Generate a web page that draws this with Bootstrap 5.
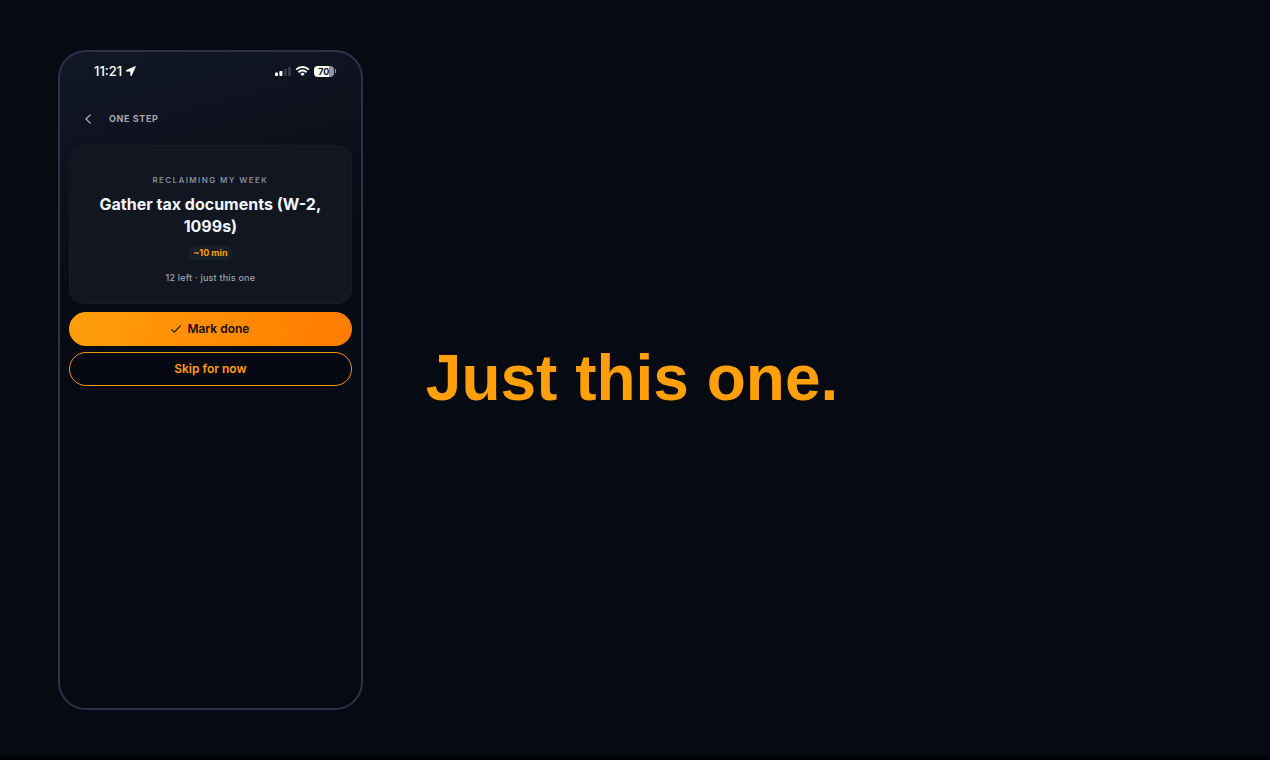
<!DOCTYPE html>
<html lang="en">
<head>
<meta charset="utf-8">
<meta name="viewport" content="width=device-width, initial-scale=1">
<title>Just this one.</title>
<link href="https://cdn.jsdelivr.net/npm/bootstrap@5.3.0/dist/css/bootstrap.min.css" rel="stylesheet">
<style>
  body { background: #060a12; color: #f4f6ff; font-family: Inter, sans-serif; }
  .stage { padding: 50px 58px 46px; gap: 63px; border-bottom: 4px solid #020207; }
  .phone { flex: 0 0 auto; width: 24vw; min-width: 304px; border: 2px solid #2e3148; border-radius: 28px;
    background: linear-gradient(165deg, #111725 0, #0e131f 90px, #080b14 240px, #060a12 320px); padding: 9px; }
  .status { padding: 0 16px 0 25px; height: 20px; font-size: 13px; line-height: 20px; font-weight: 500; color: #fff; }
  .battery { width: 20px; height: 11px; border-radius: 4px; font-size: 9px; line-height: 11px; font-weight: 700; color: #0b0f18;
    background: linear-gradient(90deg, #fff 75%, #92959c 75%); }
  .battery-tip { width: 1px; height: 4px; background: #92959c; margin-left: 1px; }
  .topbar { margin-top: 28px; height: 20px; padding-left: 12px; gap: 14px; font-size: 9px; line-height: 20px; font-weight: 700; letter-spacing: 0.6px; color: #a3a8b7; }
  .back { color: #b4b8c5; line-height: 0; width: 14px; }
  .task { margin-top: 16px; background: #111620; border: 1px solid #161b26; border-radius: 14px; padding: 27px 24px 18px; }
  .project { font-size: 8px; line-height: 14px; font-weight: 600; letter-spacing: 1.4px; color: #858a98; }
  .task-title { font-size: 16px; line-height: 22px; font-weight: 700; color: #f4f6ff; margin: 6px 0 9px; }
  .estimate { font-size: 9px; line-height: 14px; font-weight: 700; color: #ff9f0a; background: #18202c; padding: 0 5px; }
  .left-note { font-size: 9px; line-height: 14px; font-weight: 500; letter-spacing: 0.2px; color: #a0a4b0; margin-top: 11px; }
  .actions { gap: 6px; }
  .action { height: 34px; padding: 0; font-size: 12px; line-height: 18px; font-weight: 600; gap: 6px; }
  .action-done, .action-done:hover { border: 0; color: #160c08; background: linear-gradient(110deg, #ff9f0a, #ff7b00); }
  .action-skip { border: 1px solid #f5970b; color: #ff9f0a; background: #060912; }
  .tagline { font-family: "Liberation Sans", sans-serif; font-size: 64px; line-height: 74px; font-weight: 700; color: #ff9f0a; }
</style>
</head>
<body>
<main class="stage d-flex align-items-stretch min-vh-100">
  <section class="phone" aria-label="One step">
    <div class="status d-flex align-items-center justify-content-between">
      <div class="d-flex align-items-center gap-1">
        <span>11:21</span>
        <svg width="10" height="10" viewBox="0 0 10 10" aria-hidden="true"><path d="M9.6.3.5 4.3c-.5.3-.5 1 .1 1h4v4.1c0 .6.7.7 1 .1z" fill="#fff" stroke="#fff" stroke-width=".5" stroke-linejoin="round"/></svg>
      </div>
      <div class="d-flex align-items-center">
        <svg width="16" height="9" viewBox="0 0 16 9" aria-hidden="true"><rect y="5.5" width="3" height="3.5" rx=".8" fill="#fff"/><rect x="4.4" y="4" width="3" height="5" rx=".8" fill="#fff"/><rect x="8.8" y="2" width="3" height="7" rx=".8" fill="#363a45"/><rect x="13" width="3" height="9" rx=".8" fill="#363a45"/></svg>
        <svg class="ms-1 me-1" width="15" height="10" viewBox="0 0 15 10" fill="none" stroke="#fff" stroke-width="2" aria-hidden="true"><path d="M1.2 3.6a9 9 0 0 1 12.6 0M3.5 6.2a5.7 5.7 0 0 1 8 0"/><path d="M7.5 10 5.4 7.9a3 3 0 0 1 4.2 0z" fill="#fff" stroke="none"/></svg>
        <span class="battery text-center">70</span><span class="battery-tip"></span>
      </div>
    </div>
    <header class="topbar d-flex align-items-center">
      <button type="button" class="back btn border-0 p-0" aria-label="Back"><svg width="6" height="10" viewBox="0 0 6 10" fill="none" stroke="currentColor" stroke-width="1.2" stroke-linecap="round" stroke-linejoin="round"><path d="M5.2.8 1 5l4.2 4.2"/></svg></button>
      <span>ONE STEP</span>
    </header>
    <article class="task text-center">
      <div class="project">RECLAIMING MY WEEK</div>
      <h1 class="task-title">Gather tax documents (W-2, 1099s)</h1>
      <div class="d-flex justify-content-center"><span class="estimate rounded-pill">~10 min</span></div>
      <div class="left-note">12 left · just this one</div>
    </article>
    <div class="actions d-grid mt-2">
      <button type="button" class="action action-done btn rounded-pill d-flex align-items-center justify-content-center">
        <svg width="10" height="8" viewBox="0 0 10 8" fill="none" stroke="currentColor" stroke-width="1.1" stroke-linecap="round" stroke-linejoin="round" aria-hidden="true"><path d="M.7 4.7 3.2 7.2 9.4.8"/></svg>
        Mark done
      </button>
      <button type="button" class="action action-skip btn rounded-pill">Skip for now</button>
    </div>
  </section>
  <p class="tagline align-self-center mb-0 pb-1">Just this one.</p>
</main>
<script src="https://cdn.jsdelivr.net/npm/bootstrap@5.3.0/dist/js/bootstrap.bundle.min.js"></script>
</body>
</html>
